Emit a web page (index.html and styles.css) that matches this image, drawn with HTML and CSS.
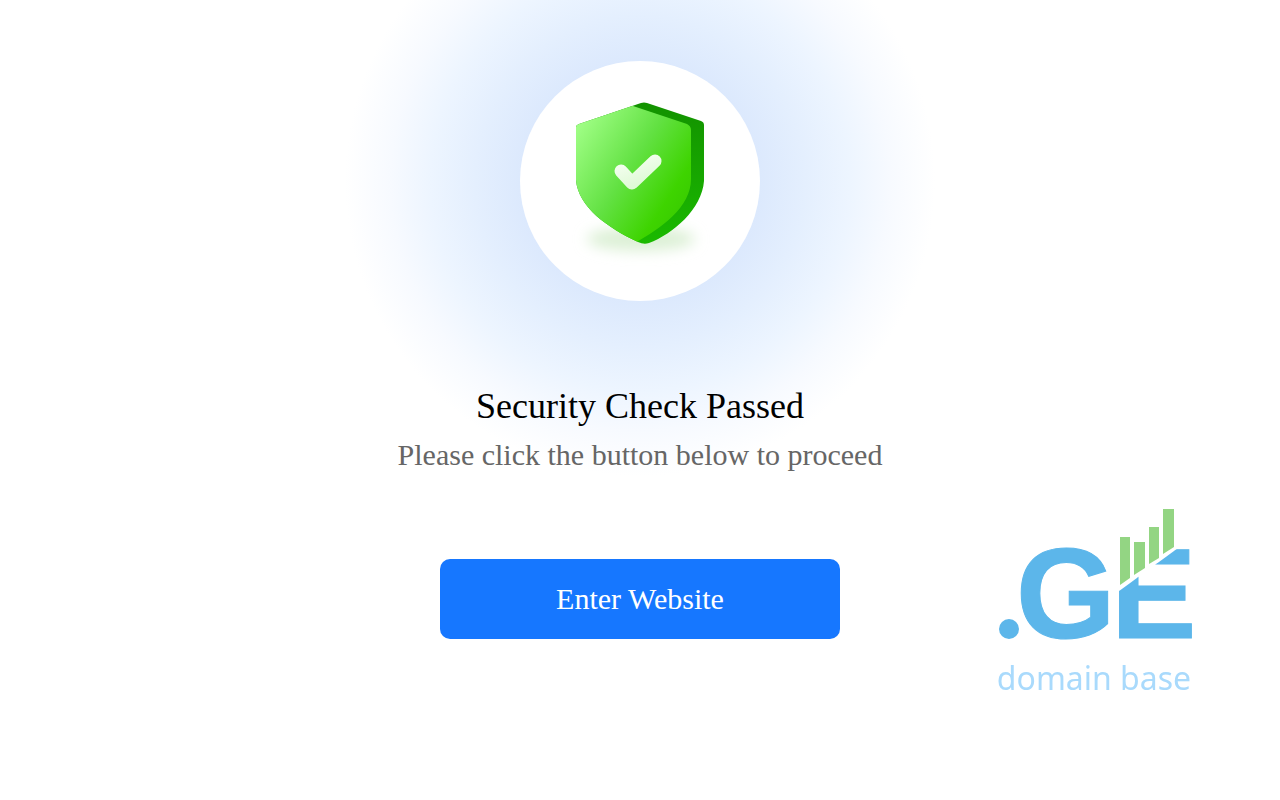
FILE: index.html
```html
<!DOCTYPE html>
<html lang="en">
<head>
    <meta charset="UTF-8">
    <meta name="viewport" content="width=device-width, initial-scale=1.0">
    <title>Security Check</title>
    <link rel="stylesheet" href="styles.css">
</head>
<body>

    <main class="check">
        <div class="badge">
            <svg class="shield" viewBox="0 0 150 172" aria-hidden="true">
                <defs>
                    <linearGradient id="face" x1="0.1" y1="0.15" x2="0.85" y2="0.8">
                        <stop offset="0" stop-color="#a2ff88"/>
                        <stop offset="0.5" stop-color="#62e142"/>
                        <stop offset="0.85" stop-color="#3ed400"/>
                        <stop offset="1" stop-color="#39cc00"/>
                    </linearGradient>
                    <linearGradient id="side" x1="0" y1="0" x2="0" y2="1">
                        <stop offset="0" stop-color="#129000"/>
                        <stop offset="1" stop-color="#1cc000"/>
                    </linearGradient>
                    <linearGradient id="tick" x1="0" y1="0" x2="0.6" y2="1">
                        <stop offset="0" stop-color="#f6fff2"/>
                        <stop offset="1" stop-color="#dffad6"/>
                    </linearGradient>
                    <filter id="soft" x="-30%" y="-80%" width="160%" height="260%">
                        <feGaussianBlur stdDeviation="7"/>
                    </filter>
                    <clipPath id="outline">
                        <path d="M14 29 L73 9 Q79 6 85 9 L136 26 Q139 27 139 30 L139 86 C137 114 108 139 84 148 Q79 150 73 147 C43 133 13 112 11 85 L11 32 Q11 30 14 29 Z"/>
                    </clipPath>
                </defs>
                <ellipse cx="76" cy="144" rx="54" ry="12" fill="#dcf0d5" filter="url(#soft)"/>
                <g clip-path="url(#outline)">
                    <rect width="150" height="170" fill="url(#side)"/>
                    <path d="M0 0 H62 L68 11 L122 29 Q126 31 126 35 V84 C126 112 97 133 68 149 L60 170 H0 Z" fill="url(#face)"/>
                </g>
                <path d="M56 76 L67 88 L90 66" fill="none" stroke="url(#tick)" stroke-width="13" stroke-linecap="round" stroke-linejoin="round"/>
            </svg>
        </div>
        <h1 class="title">Security Check Passed</h1>
        <p class="hint">Please click the button below to proceed</p>
        <button type="button" class="enter">Enter Website</button>
    </main>

    <svg class="brand" viewBox="0 0 210 200" role="img" aria-label=".GE domain base">
        <defs>
            <clipPath id="cut">
                <path d="M125 94 L195 43 H210 V150 H125 Z"/>
            </clipPath>
        </defs>
        <circle class="brand-blue" cx="19" cy="129" r="10"/>
        <text class="brand-blue brand-letter" x="26" y="138">G</text>
        <g clip-path="url(#cut)">
            <text class="brand-blue brand-letter" x="121" y="138">E</text>
        </g>
        <!-- chart bars -->
        <g class="brand-green">
            <path d="M130 37 H140 V78 L130 85 Z"/>
            <path d="M144 42 H155 V68 L144 75 Z"/>
            <path d="M159 27 H169 V58 L159 64 Z"/>
            <path d="M173 9 H184 V47 L173 54 Z"/>
        </g>
        <text class="brand-name" x="104" y="190">domain base</text>
    </svg>

</body>
</html>
```
FILE: styles.css
```css
body {
    margin: 0;
    background-color: #fff;
    font-family: "Liberation Serif", "Times New Roman", serif;
    overflow-x: hidden;
}
.check {
    display: flex;
    flex-direction: column;
    align-items: center;
    padding: 61px 20px 40px;
    text-align: center;
    /* blue glow behind the badge */
    background: radial-gradient(circle at 50% 181px, #dce9fd 120px, #e4effe 165px, #edf5ff 210px, #f7faff 250px, #fff 295px);
}
.badge {
    display: flex;
    align-items: center;
    justify-content: center;
    width: 240px;
    height: 240px;
    margin-bottom: 84px;
    border-radius: 50%;
    background-color: #fff;
}
.shield {
    width: 150px;
    height: 172px;
}
.title {
    margin: 0 0 11px;
    font-size: 36px;
    font-weight: normal;
    line-height: 42px;
    color: #000;
}
.hint {
    margin: 0 0 87px;
    font-size: 30px;
    line-height: 34px;
    color: #666;
}
.enter {
    width: 400px;
    max-width: 100%;
    height: 80px;
    border: none;
    border-radius: 10px;
    background-color: #1677ff;
    color: #fff;
    font-family: inherit;
    font-size: 30px;
    cursor: pointer;
}
.enter:hover {
    background-color: #4096ff;
}
.brand {
    position: fixed; /* watermark in the corner */
    right: 80px;
    bottom: 100px;
    width: 210px;
    height: 200px;
    pointer-events: none;
}
.brand-blue {
    fill: #5cb6ea;
}
.brand-green {
    fill: #93d583;
}
.brand-letter {
    font-family: "Liberation Sans", Arial, sans-serif;
    font-size: 128px;
    font-weight: bold;
    stroke: #5cb6ea;
    stroke-width: 1px;
}
.brand-name {
    font-family: "Noto Sans", sans-serif;
    font-size: 32px;
    text-anchor: middle;
    fill: #a9dafc;
}
```
